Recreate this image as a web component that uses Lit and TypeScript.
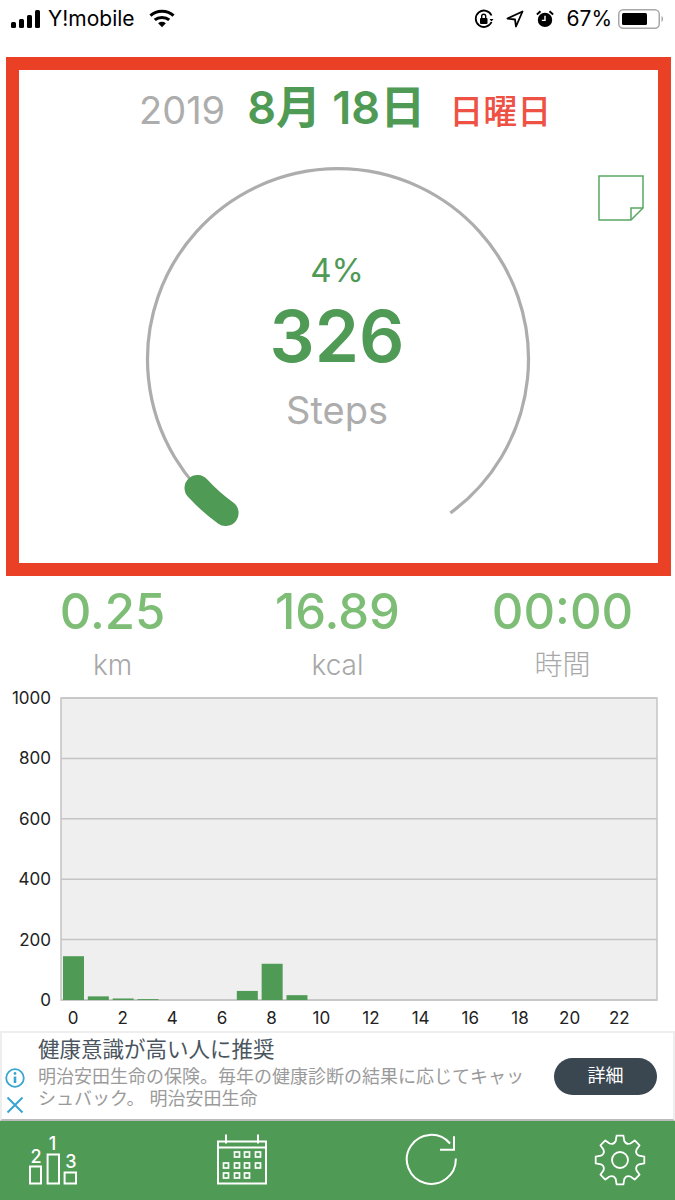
import { LitElement, html, css, svg, unsafeCSS } from 'lit';
import { customElement } from 'lit/decorators.js';

const GREEN = '#4f9a55';
const green = unsafeCSS(GREEN);

// steps per hour, read off the bars
const HOURS = [145, 12, 5, 3, 0, 0, 0, 30, 120, 16];
const PLOT_LEFT = 61;
const PLOT_TOP = 11;
const PLOT_W = 596;
const PLOT_H = 302;
const SLOT = 24.83;

@customElement('app-root')
export class AppRoot extends LitElement {
  static styles = css`
    :host {
      display: block;
      width: 675px;
      height: 1200px;
      overflow: hidden;
      background: #fff;
      font-family: Inter, 'Noto Sans CJK JP', sans-serif;
    }
    .status {
      display: flex;
      align-items: center;
      height: 37px;
      padding: 0 11px;
      color: #000;
      font-size: 21px;
      box-sizing: border-box;
    }
    .status .carrier { margin-left: 8px; margin-right: 14px; }
    .status .spacer { flex: 1; }
    .status .pct { margin: 0 6px 0 12px; }
    .status svg { display: block; }
    .status .rt { margin-left: 12px; }

    .today {
      position: relative;
      box-sizing: border-box;
      width: 665px;
      height: 519px;
      margin: 20px 0 0 6px;
      border: 13px solid #ea4025;
    }
    .date {
      display: flex;
      align-items: baseline;
      height: 76px;
      padding: 2px 0 0 120px;
      box-sizing: border-box;
    }
    .year { font-size: 38px; color: #adadad; margin-right: 22px; }
    .day { font-size: 45px; font-weight: 600; color: ${green}; margin-right: 24px; }
    .dow { font-size: 34px; font-weight: 500; color: #ee5245; }
    .note { position: absolute; right: 14px; top: 105px; }
    .gauge { position: absolute; left: 121px; top: 89px; }
    .center {
      position: absolute;
      left: 122px;
      top: 180px;
      width: 392px;
      display: flex;
      flex-direction: column;
      align-items: center;
    }
    .pct-done { font-size: 33px; line-height: 40px; color: ${green}; }
    .steps { font-size: 71px; line-height: 92px; font-weight: 600; color: ${green}; }
    .unit { font-size: 38px; line-height: 56px; color: #adadad; }

    .stats {
      display: grid;
      grid-template-columns: repeat(3, 225px);
      text-align: center;
      height: 109px;
      padding-top: 2px;
    }
    .stats .val { font-size: 49px; line-height: 68px; font-weight: 500; color: #7dbd76; }
    .stats .lbl { font-size: 28px; line-height: 38px; font-weight: 300; color: #a8a8a8; }
    .chart { display: block; }

    .ad {
      display: flex;
      box-sizing: border-box;
      height: 90px;
      border: 2px solid #eee;
      border-bottom-color: #bbb;
    }
    .ad-icons {
      width: 26px;
      padding-top: 35px;
      display: flex;
      flex-direction: column;
      gap: 8px;
      align-items: center;
    }
    .ad-text { width: 490px; margin-left: 10px; }
    .ad-title { font-size: 21.5px; line-height: 33px; color: #4a5560; white-space: nowrap; }
    .ad-body { font-size: 18px; line-height: 22px; color: #9a9a9a; }
    .ad-btn {
      align-self: center;
      margin: 0 16px 0 auto;
      width: 103px;
      height: 37px;
      border-radius: 19px;
      background: #3a4751;
      color: #fff;
      font-size: 18px;
      line-height: 35px;
      text-align: center;
    }

    .tabs {
      display: flex;
      justify-content: space-between;
      align-items: center;
      height: 79px;
      padding: 0 27px 0 25px;
      background: ${green};
    }
    .tabs svg { display: block; }
  `;

  private chart() {
    const gridY = [0, 1, 2, 3, 4, 5].map(i => PLOT_TOP + (i * PLOT_H) / 5);
    const xLabels = Array.from({ length: 12 }, (_, i) => i * 2);
    const base = PLOT_TOP + PLOT_H;
    return html`<svg class="chart" width="675" height="344" viewBox="0 0 675 344">
      <rect x=${PLOT_LEFT} y=${PLOT_TOP} width=${PLOT_W} height=${PLOT_H} fill="#efefef" stroke="#c4c4c4" stroke-width="1.5"></rect>
      ${gridY.map(
        (y, i) => svg`
        <line x1=${PLOT_LEFT} x2=${PLOT_LEFT + PLOT_W} y1=${y} y2=${y} stroke="#c4c4c4" stroke-width="1.5"></line>
        <text x="51" y=${y + 6} text-anchor="end" font-size="17" fill="#222">${1000 - i * 200}</text>`,
      )}
      ${HOURS.map((v, i) =>
        v
          ? svg`<rect x=${63 + i * SLOT} y=${base - (v / 1000) * PLOT_H} width="21" height=${(v / 1000) * PLOT_H} fill=${GREEN}></rect>`
          : '',
      )}
      ${xLabels.map(
        h => svg`<text x=${73 + h * SLOT} y="337" text-anchor="middle" font-size="17" fill="#222">${h}</text>`,
      )}
    </svg>`;
  }

  private gear() {
    const cx = 28;
    const cy = 27;
    const teeth = 8;
    const step = (2 * Math.PI) / teeth;
    let d = '';
    for (let i = 0; i < teeth; i++) {
      const a = i * step - Math.PI / 2;
      const at = (r: number, off: number) =>
        `${(cx + r * Math.cos(a + off)).toFixed(1)} ${(cy + r * Math.sin(a + off)).toFixed(1)}`;
      d += `${i ? 'A5 5 0 0 0' : 'M'} ${at(19.5, -0.22)} L${at(24.5, -0.14)} L${at(24.5, 0.14)} L${at(19.5, 0.22)} `;
    }
    d += 'A5 5 0 0 0 ' + `${(cx + 19.5 * Math.cos(-Math.PI / 2 - 0.22)).toFixed(1)} ${(cy + 19.5 * Math.sin(-Math.PI / 2 - 0.22)).toFixed(1)} Z`;
    return html`<svg width="56" height="56" viewBox="0 0 56 56" fill="none" stroke="#fff" stroke-width="1.8" stroke-linejoin="round">
      <path d=${d}></path>
      <circle cx=${cx} cy=${cy} r="8"></circle>
    </svg>`;
  }

  render() {
    return html`
      <div class="status">
        <svg width="29" height="18" viewBox="0 0 29 18" fill="#000">
          <rect x="0" y="12" width="5" height="6" rx="1.5"></rect>
          <rect x="8" y="9" width="5" height="9" rx="1.5"></rect>
          <rect x="16" y="5" width="5" height="13" rx="1.5"></rect>
          <rect x="24" y="0" width="5" height="18" rx="1.5"></rect>
        </svg>
        <span class="carrier">Y!mobile</span>
        <svg width="26" height="19" viewBox="0 0 27 19" fill="none" stroke="#000" stroke-width="3.2">
          <path d="M1.5 6.5 C8 .5 19 .5 25.5 6.5"></path>
          <path d="M6 11 C10 7.5 17 7.5 21 11"></path>
          <path d="M13.5 18.5 L9.5 14.5 C12 12.5 15 12.5 17.5 14.5 Z" fill="#000" stroke="none"></path>
        </svg>
        <span class="spacer"></span>
        <svg width="20" height="20" viewBox="0 0 20 20" fill="none" stroke="#000" stroke-width="1.8">
          <path d="M17.5 13 A8.2 8.2 0 1 1 17.5 6.5"></path>
          <path d="M15.5 10 h4 l-2 2.5 Z" fill="#000" stroke="none"></path>
          <rect x="6" y="9" width="7.5" height="6" rx="1" fill="#000" stroke="none"></rect>
          <path d="M7.7 9 V7.3 a2 2 0 0 1 4 0 V9" stroke-width="1.4"></path>
        </svg>
        <svg class="rt" width="18" height="18" viewBox="0 0 18 18" fill="none" stroke="#000" stroke-width="1.8" stroke-linejoin="round">
          <path d="M16.5 1.5 L1.5 8.5 L9 9.5 L10 16.5 Z"></path>
        </svg>
        <svg class="rt" width="18" height="20" viewBox="0 0 20 20">
          <circle cx="10" cy="11" r="8" fill="#000"></circle>
          <path d="M10 6.5 V11.5 H6.5" fill="none" stroke="#fff" stroke-width="1.6"></path>
          <path d="M1 5 L5 1.5 M19 5 L15 1.5" stroke="#000" stroke-width="2.2"></path>
        </svg>
        <span class="pct">67%</span>
        <svg width="46" height="20" viewBox="0 0 46 20">
          <rect x=".75" y=".75" width="40.5" height="18.5" rx="4.5" fill="none" stroke="#a8a8a8" stroke-width="1.5"></rect>
          <rect x="4" y="4" width="25" height="12" rx="1.5" fill="#000"></rect>
          <path d="M43.5 7 C45.5 7.5 45.5 12.5 43.5 13 Z" fill="#a8a8a8"></path>
        </svg>
      </div>

      <section class="today">
        <div class="date">
          <span class="year">2019</span>
          <span class="day">8月 18日</span>
          <span class="dow">日曜日</span>
        </div>
        <svg class="note" width="46" height="46" viewBox="0 0 46 46" fill="none" stroke="#5aa662" stroke-width="1.5">
          <path d="M1 1 H45 V33 L33 45 H1 Z"></path>
          <path d="M33 45 V33 H45"></path>
        </svg>
        <svg class="gauge" width="396" height="396" viewBox="0 0 396 396" fill="none">
          <path d="M85.6 354 A190.5 190.5 0 1 1 310.4 354" stroke="#adadad" stroke-width="3.2"></path>
          <path d="M57.5 329 A190.5 190.5 0 0 0 85.6 354" stroke=${GREEN} stroke-width="26" stroke-linecap="round"></path>
        </svg>
        <div class="center">
          <span class="pct-done">4%</span>
          <span class="steps">326</span>
          <span class="unit">Steps</span>
        </div>
      </section>

      <div class="stats">
        <div><div class="val">0.25</div><div class="lbl">km</div></div>
        <div><div class="val">16.89</div><div class="lbl">kcal</div></div>
        <div><div class="val">00:00</div><div class="lbl">時間</div></div>
      </div>

      ${this.chart()}

      <div class="ad">
        <div class="ad-icons">
          <svg width="20" height="20" viewBox="0 0 20 20" fill="none" stroke="#3aa6d0" stroke-width="1.8">
            <circle cx="10" cy="10" r="8.8"></circle>
            <path d="M10 8.5 V15" stroke-width="2.6"></path>
            <circle cx="10" cy="5.5" r="1.4" fill="#3aa6d0" stroke="none"></circle>
          </svg>
          <svg width="18" height="18" viewBox="0 0 18 18" fill="none" stroke="#3aa6d0" stroke-width="2">
            <path d="M1.5 1.5 L16.5 16.5 M16.5 1.5 L1.5 16.5"></path>
          </svg>
        </div>
        <div class="ad-text">
          <div class="ad-title">健康意識が高い人に推奨</div>
          <div class="ad-body">明治安田生命の保険。毎年の健康診断の結果に応じてキャッシュバック。 明治安田生命</div>
        </div>
        <div class="ad-btn">詳細</div>
      </div>

      <nav class="tabs">
        <svg width="56" height="56" viewBox="0 0 56 56" fill="none" stroke="#fff" stroke-width="2">
          <rect x="5" y="33.5" width="11" height="17"></rect>
          <rect x="22.6" y="21.5" width="11.4" height="29"></rect>
          <rect x="39.6" y="39.5" width="11.4" height="11"></rect>
          <g fill="#fff" stroke="none" font-size="18" font-weight="500" text-anchor="middle">
            <text x="11" y="29.5">2</text>
            <text x="27.5" y="16.5">1</text>
            <text x="46" y="34.5">3</text>
          </g>
        </svg>
        <svg width="56" height="56" viewBox="0 0 56 56" fill="none" stroke="#fff" stroke-width="2">
          <rect x="4" y="8.5" width="48" height="42"></rect>
          <path d="M4 14.5 H52 M12 1.5 V10.5 M44 1.5 V10.5"></path>
          ${[
            [23, 21.5], [33, 21.5], [44, 21.5],
            [12, 32.5], [23, 32.5], [33, 32.5], [44, 32.5],
            [12, 42.5], [23, 42.5], [33, 42.5],
          ].map(([x, y]) => svg`<rect x=${x - 2.5} y=${y - 2.5} width="5" height="5" stroke-width="1.7"></rect>`)}
        </svg>
        <svg width="56" height="56" viewBox="0 0 56 56" fill="none" stroke="#fff" stroke-width="2">
          <path d="M52.8 25.5 A24.5 24.5 0 1 1 47 10.5"></path>
          <path d="M37 16.8 H51 V3.2"></path>
        </svg>
        ${this.gear()}
      </nav>
    `;
  }
}
